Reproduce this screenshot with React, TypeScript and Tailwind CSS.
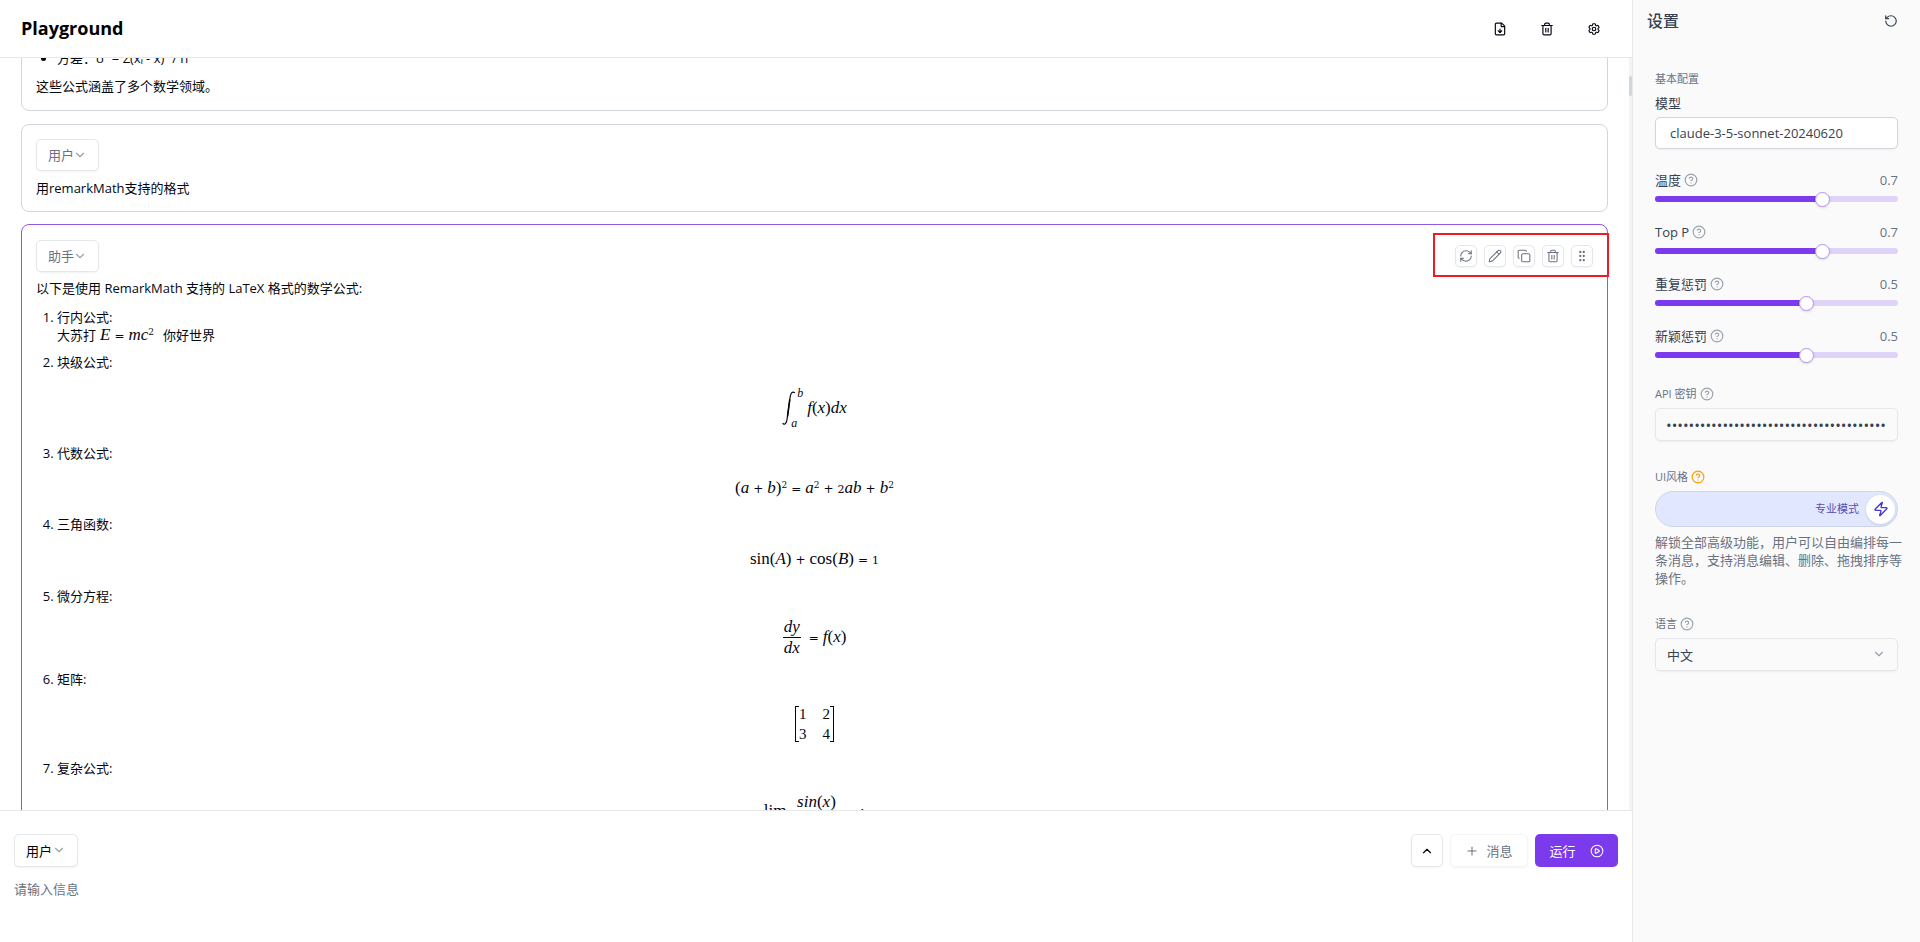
import { useState } from "react";
import type { ReactNode } from "react";
import { FileDown, Trash2, RefreshCw, Pencil, Copy, GripVertical, ChevronDown, ChevronUp, Plus, RotateCcw, Zap, CircleQuestionMark, CirclePlay } from "lucide-react";
import { HiOutlineCog6Tooth } from "react-icons/hi2";

const actionButton =
  "flex size-[22px] items-center justify-center rounded-[5px] border border-gray-200 bg-white text-gray-500 shadow-xs";

function RoleSelect({ label, value, muted = true }: { label: string; value: string; muted?: boolean }) {
  return (
    <div
      className={
        muted
          ? "relative h-8 w-[63px] rounded-[5px] border border-gray-200 bg-white text-gray-500 shadow-xs"
          : "relative h-[33px] w-16 rounded-[5px] border border-gray-200 bg-white text-black shadow-xs"
      }
    >
      <select aria-label={label} defaultValue={value} className="h-full w-full appearance-none bg-transparent pl-[11px] outline-none">
        <option>用户</option>
        <option>助手</option>
      </select>
      <ChevronDown aria-hidden className="pointer-events-none absolute top-2 right-[11px] size-[14px] text-gray-400" />
    </div>
  );
}

function Op({ children }: { children: string }) {
  return <span className="mx-1 font-[DejaVu_Sans] text-[12px] not-italic">{children}</span>;
}

function Up({ children }: { children: string }) {
  return <span className="not-italic">{children}</span>;
}

function Num({ children }: { children: string }) {
  return <span className="font-[DejaVu_Serif] text-[11px] not-italic">{children}</span>;
}

function Sq() {
  return <sup className="relative top-0 align-[5px] font-[DejaVu_Serif] text-[9px] leading-none not-italic">2</sup>;
}

function Fraction({ top, bottom }: { top: ReactNode; bottom: ReactNode }) {
  return (
    <span className="inline-flex flex-col items-center leading-5">
      <span className="border-b border-current px-px">{top}</span>
      <span>{bottom}</span>
    </span>
  );
}

function MathBlock({ size, children }: { size: string; children: ReactNode }) {
  return (
    <div className={`mt-[9px] -ml-[21px] flex items-center justify-center font-[Liberation_Serif,serif] text-[17px] leading-5 italic ${size}`}>
      {children}
    </div>
  );
}

function Help({ amber = false }: { amber?: boolean }) {
  return <CircleQuestionMark aria-hidden className={amber ? "size-[14px] text-amber-500" : "size-[14px] text-gray-400"} />;
}

function SliderRow({ id, label, initial, percent }: { id: string; label: string; initial: number; percent: number }) {
  const [value, setValue] = useState(percent);
  return (
    <div className="h-[52px]">
      <div className="flex h-[22px] items-center gap-[3px]">
        <label htmlFor={id} className="text-gray-700">{label}</label>
        <Help />
        <span className="ml-auto text-gray-500">{initial}</span>
      </div>
      <div className="relative flex h-4 items-center">
        <div className="h-[6px] w-full overflow-hidden rounded-full bg-[#e0d3f8]">
          <div className="h-full bg-[#7c3aed]" style={{ width: `${value}%` }} />
        </div>
        <input
          id={id}
          type="range"
          min={0}
          max={100}
          value={value}
          onChange={(e) => setValue(Number(e.target.value))}
          className="absolute inset-0 m-0 h-4 w-full appearance-none bg-transparent [&::-webkit-slider-thumb]:size-[15px] [&::-webkit-slider-thumb]:appearance-none [&::-webkit-slider-thumb]:rounded-full [&::-webkit-slider-thumb]:border [&::-webkit-slider-thumb]:border-[#b794f4] [&::-webkit-slider-thumb]:bg-white [&::-webkit-slider-thumb]:shadow-sm"
        />
      </div>
    </div>
  );
}

function Settings() {
  return (
    <aside className="flex w-72 shrink-0 flex-col border-l border-gray-200 bg-[#fafafa] text-gray-700">
      <div className="flex h-[42px] items-center justify-between pr-[22px] pl-[14px]">
        <h2 className="text-base font-medium">设置</h2>
        <button aria-label="重置" className="text-gray-700">
          <RotateCcw className="size-[14px]" />
        </button>
      </div>
      <div className="flex flex-col pt-7 pr-[22px] pl-[22px]">
        <h3 className="h-[18px] text-[11px] leading-[18px] text-gray-500">基本配置</h3>
        <label htmlFor="model" className="mt-[5px] h-5 leading-5">模型</label>
        <input
          id="model"
          defaultValue="claude-3-5-sonnet-20240620"
          className="mt-1 mb-5 h-8 w-full rounded-[5px] border border-gray-300 bg-white px-[14px] shadow-xs outline-none"
        />
        <SliderRow id="temperature" label="温度" initial={0.7} percent={70} />
        <SliderRow id="top-p" label="Top P" initial={0.7} percent={70} />
        <SliderRow id="frequency" label="重复惩罚" initial={0.5} percent={63} />
        <SliderRow id="presence" label="新颖惩罚" initial={0.5} percent={63} />

        <div className="mt-[7px] flex h-5 items-center gap-[3px] text-[11px] text-gray-500">
          <label htmlFor="api-key">API 密钥</label>
          <Help />
        </div>
        <input
          id="api-key"
          type="password"
          defaultValue="sk-0123456789abcdefghijklmnopqrstuvwxyz"
          className="mt-1 h-[33px] w-full rounded-[5px] border border-gray-200 bg-transparent px-[10px] text-[15px] shadow-xs outline-none"
        />

        <div className="mt-[26px] flex h-5 items-center gap-[3px] text-[11px] text-gray-500">
          <span>UI风格</span>
          <Help amber />
        </div>
        <button
          role="switch"
          aria-checked="true"
          className="mt-1 flex h-9 w-full items-center justify-end gap-[7px] rounded-full border border-[#cfd5ec] bg-indigo-100 pr-[2px] text-[11px] text-[#5b4fae]"
        >
          专业模式
          <span className="flex size-[29px] items-center justify-center rounded-full bg-white text-[#4338ca] shadow-sm">
            <Zap className="size-4" />
          </span>
        </button>
        <p className="mt-[6px] -mr-2 leading-[18px] text-gray-500">
          解锁全部高级功能，用户可以自由编排每一条消息，支持消息编辑、删除、拖拽排序等操作。
        </p>

        <div className="mt-[27px] flex h-5 items-center gap-[3px] text-[11px] text-gray-500">
          <label htmlFor="language">语言</label>
          <Help />
        </div>
        <div className="relative mt-1 h-[33px] rounded-[5px] border border-gray-200 shadow-xs">
          <select id="language" className="h-full w-full appearance-none bg-transparent pl-[11px] outline-none">
            <option>中文</option>
            <option>English</option>
          </select>
          <ChevronDown aria-hidden className="pointer-events-none absolute top-2 right-[11px] size-[14px] text-gray-400" />
        </div>
      </div>
    </aside>
  );
}

export default function App() {
  return (
    <div className="flex h-screen overflow-hidden bg-white font-[Open_Sans,Noto_Sans_CJK_SC,sans-serif] text-[13px] leading-[18px] text-gray-950">
      <div className="flex min-w-0 flex-1 flex-col">
        <header className="flex h-[58px] shrink-0 items-center justify-between border-b border-gray-200 pr-[31px] pl-[21px]">
          <h1 className="pb-[2px] text-lg font-bold text-black">Playground</h1>
          <div className="flex items-center gap-[33px]">
            <button aria-label="导出"><FileDown className="size-[14px]" /></button>
            <button aria-label="清空"><Trash2 className="size-[14px]" /></button>
            <button aria-label="设置"><HiOutlineCog6Tooth className="size-[14px]" strokeWidth={2} /></button>
          </div>
        </header>

        <main className="flex min-h-0 flex-1">
          <div className="flex min-w-0 flex-1 flex-col gap-3 overflow-hidden pr-[21px] pl-[21px]">
            <article className="-mt-[10px] mb-px shrink-0 rounded-b-lg border border-gray-300 px-[14px] pb-[15px]">
              <ul className="list-disc pl-[21px]">
                <li>方差：σ² = Σ(xᵢ - x̄)² / n</li>
              </ul>
              <p className="mt-[10px]">这些公式涵盖了多个数学领域。</p>
            </article>

            <article className="shrink-0 rounded-lg border border-gray-300 p-[14px]">
              <RoleSelect label="角色" value="用户" />
              <p className="mt-2">用remarkMath支持的格式</p>
            </article>

            <article className="relative shrink-0 rounded-t-lg border border-[#9257e6] px-[14px] pt-[15px] pb-[14px]">
              <RoleSelect label="角色" value="助手" />
              <div className="absolute top-2 -right-[2px] flex h-11 w-[176px] items-center justify-end gap-[7px] border-2 border-[#ed1c24] pt-px pr-[14px]">
                <button aria-label="重新生成" className={actionButton}><RefreshCw className="size-[14px]" strokeWidth={1.8} /></button>
                <button aria-label="编辑" className={actionButton}><Pencil className="size-[14px]" strokeWidth={1.8} /></button>
                <button aria-label="复制" className={actionButton}><Copy className="size-[14px]" strokeWidth={1.8} /></button>
                <button aria-label="删除" className={actionButton}><Trash2 className="size-[14px]" strokeWidth={1.8} /></button>
                <button aria-label="拖动" className={actionButton}><GripVertical className="size-[14px]" strokeWidth={2} /></button>
              </div>
              <p className="mt-[7px]">以下是使用 RemarkMath 支持的 LaTeX 格式的数学公式:</p>
              <ol className="mt-[11px] flex list-decimal flex-col gap-[9px] pl-[21px]">
                <li>
                  行内公式:
                  <div className="flex h-[18px] items-center">
                    大苏打
                    <span className="mr-[9px] ml-1 font-[Liberation_Serif,serif] text-[17px] italic">E<Op>=</Op>mc<Sq /></span>
                    你好世界
                  </div>
                </li>
                <li>
                  块级公式:
                  <MathBlock size="h-[55px]">
                    <svg viewBox="0 0 14 36" className="h-9 w-[14px]" fill="none" stroke="currentColor" strokeLinecap="round">
                      <path d="M1 33.5c2 2 3.600-.5 4.200-5L8 8c.6-4.500 2-7 4.500-5.500" strokeWidth="1.200" />
                      <path d="M5.600 26 7.700 10" strokeWidth="1.600" />
                    </svg>
                    <span className="-ml-[5px] flex h-[42px] flex-col justify-between text-xs leading-3">
                      <span className="pl-[6px]">b</span>
                      <span>a</span>
                    </span>
                    <span className="ml-1">f<Up>(</Up>x<Up>)</Up>dx</span>
                  </MathBlock>
                </li>
                <li>
                  代数公式:
                  <MathBlock size="h-[35px]">
                    <span><Up>(</Up>a<Op>+</Op>b<Up>)</Up><Sq /><Op>=</Op>a<Sq /><Op>+</Op><Num>2</Num>ab<Op>+</Op>b<Sq /></span>
                  </MathBlock>
                </li>
                <li>
                  三角函数:
                  <MathBlock size="h-9">
                    <span><Up>sin(</Up>A<Up>)</Up><Op>+</Op><Up>cos(</Up>B<Up>)</Up><Op>=</Op><Num>1</Num></span>
                  </MathBlock>
                </li>
                <li>
                  微分方程:
                  <MathBlock size="h-[47px]">
                    <Fraction top="dy" bottom="dx" />
                    <span className="ml-1"><Op>=</Op>f<Up>(</Up>x<Up>)</Up></span>
                  </MathBlock>
                </li>
                <li>
                  矩阵:
                  <MathBlock size="h-[53px]">
                    <span className="h-9 w-1 border border-r-0 border-current" />
                    <span className="grid grid-cols-2 gap-x-4 text-[15px] leading-5 not-italic">
                      <span>1</span><span>2</span><span>3</span><span>4</span>
                    </span>
                    <span className="h-9 w-1 border border-l-0 border-current" />
                  </MathBlock>
                </li>
                <li>
                  复杂公式:
                  <MathBlock size="h-[53px]">
                    <span className="mr-[9px] flex flex-col items-center pt-2 leading-4 not-italic">
                      lim
                      <span className="text-xs leading-3">x→0</span>
                    </span>
                    <Fraction top={<>sin<Up>(</Up>x<Up>)</Up></>} bottom="x" />
                    <span className="ml-1"><Op>=</Op><Num>1</Num></span>
                  </MathBlock>
                </li>
              </ol>
            </article>
          </div>
          <div className="w-[3px] shrink-0 bg-gray-100">
            <div className="mt-[18px] h-5 rounded-full bg-gray-300" />
          </div>
        </main>

        <footer className="flex h-[132px] shrink-0 flex-col border-t border-gray-200 px-[14px] pt-[23px]">
          <div className="flex items-center justify-between">
            <RoleSelect label="发送角色" value="用户" muted={false} />
            <div className="flex gap-[7px]">
              <button aria-label="展开" className="flex h-[33px] w-8 items-center justify-center rounded-[5px] border border-gray-200 shadow-xs">
                <ChevronUp className="size-[14px]" />
              </button>
              <button className="flex h-[33px] w-[78px] items-center justify-center gap-[7px] rounded-[5px] border border-gray-100 text-gray-500 shadow-xs">
                <Plus className="size-[14px]" strokeWidth={1.8} />
                消息
              </button>
              <button className="flex h-[33px] w-[83px] items-center justify-center gap-[14px] rounded-[5px] bg-[#7c3aed] text-white shadow-xs">
                运行
                <CirclePlay className="size-[14px]" strokeWidth={1.8} />
              </button>
            </div>
          </div>
          <textarea
            aria-label="输入"
            placeholder="请输入信息"
            className="mt-[13px] min-h-0 w-full flex-1 resize-none bg-transparent leading-[18px] outline-none placeholder:text-gray-500"
          />
        </footer>
      </div>
      <Settings />
    </div>
  );
}
